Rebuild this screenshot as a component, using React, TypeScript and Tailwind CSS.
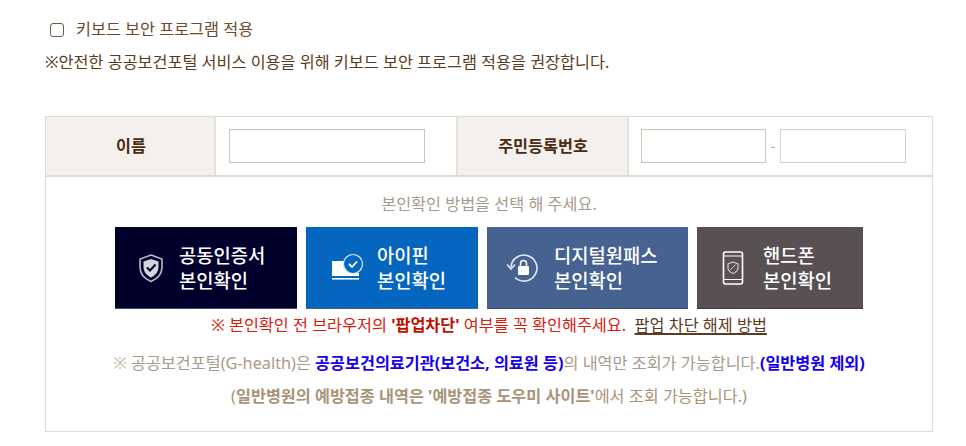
import React from "react";

const font = { fontFamily: '"Noto Sans", "Noto Sans CJK KR", sans-serif' };

function Shield() {
  return (
    <svg width="28" height="30" viewBox="0 0 28 30" fill="none" className="shrink-0">
      <path d="M14 2 L25 6 V14 C25 21 20 26 14 28.5 C8 26 3 21 3 14 V6 Z" stroke="#b9bcc8" strokeWidth="1.6" />
      <path d="M14 6 L21.5 8.6 V14 C21.5 19 18 22.5 14 24.5 C10 22.5 6.5 19 6.5 14 V8.6 Z" fill="#d3d5df" />
      <path d="M10 14.5 L13 17.5 L18.5 11.5" stroke="#00002d" strokeWidth="2" />
    </svg>
  );
}

function Ipin() {
  return (
    <svg width="32" height="30" viewBox="0 0 32 30" fill="none" className="shrink-0">
      <path d="M1 8 H13 A9 9 0 0 0 23 20 H28 V23 H1 Z" fill="#fff" />
      <rect x="1" y="25" width="27" height="1.6" fill="#fff" />
      <circle cx="22" cy="11" r="9.5" stroke="#d6e4f5" strokeWidth="1.2" />
      <path d="M18 11 L21 14 L26 8.5" stroke="#fff" strokeWidth="1.8" />
    </svg>
  );
}

function Lock() {
  return (
    <svg width="34" height="32" viewBox="0 0 34 32" fill="none" className="shrink-0">
      <path d="M5 15 A13 13 0 1 1 9 25.5" stroke="#e4e9f2" strokeWidth="1.6" />
      <path d="M1 12.5 L5 17 L9 12.5" stroke="#e4e9f2" strokeWidth="1.6" />
      <rect x="12" y="14" width="11" height="9" rx="1" fill="#fff" />
      <path d="M14.5 14 V11.5 A3 3 0 0 1 20.5 11.5 V14" stroke="#fff" strokeWidth="1.5" />
    </svg>
  );
}

function Phone() {
  return (
    <svg width="22" height="34" viewBox="0 0 22 34" fill="none" className="shrink-0">
      <rect x="1.5" y="1" width="19" height="32" rx="2" stroke="#fff" strokeWidth="1.6" />
      <path d="M1.5 5 H20.5 M1.5 28.5 H20.5" stroke="#fff" strokeWidth="1.2" />
      <path d="M11 11 L16 13 V16.5 C16 19.5 13.5 21.5 11 22.5 C8.5 21.5 6 19.5 6 16.5 V13 Z" stroke="#cfcbcc" strokeWidth="1.2" />
      <path d="M8.5 19 L13.5 13.5" stroke="#cfcbcc" strokeWidth="1" />
    </svg>
  );
}

export default function App() {
  return (
    <div className="w-[966px] h-[446px] bg-white overflow-hidden text-[16.25px] text-[#5a3c22]" style={font}>
      <div className="h-[19px]" />
      <label className="flex items-center h-[21px] pl-[50px] gap-[12px] text-[#6b4a2e]">
        <span className="w-[14px] h-[14px] rounded-[3px] border border-[#6b5a4a] bg-white" />
        <span>키보드 보안 프로그램 적용</span>
      </label>
      <p className="mt-[11px] ml-[45px] h-[22px] leading-[22px] text-[#5a3c22]">※안전한 공공보건포털 서비스 이용을 위해 키보드 보안 프로그램 적용을 권장합니다.</p>

      <div className="mt-[43px] ml-[45px] w-[888px] h-[316px] border border-[#e2dbd4]">
        <div className="flex h-[60px] border-b-2 border-[#e2dbd4]">
          <div className="w-[170px] bg-[#f3f0ed] flex items-center justify-center pl-[2px] font-bold text-[#4a2c12] border-r-2 border-[#e6e0da]">이름</div>
          <div className="w-[240px] flex items-center pl-[13px]">
            <div className="w-[196px] h-[34px] border border-[#cfc3b6] bg-white" />
          </div>
          <div className="w-[173px] bg-[#f3f0ed] flex items-center justify-center pl-[1px] font-bold text-[#4a2c12] border-x-2 border-[#e6e0da]">주민등록번호</div>
          <div className="flex-1 flex items-center pl-[12px]">
            <div className="w-[125px] h-[34px] border border-[#cfc3b6] bg-white" />
            <span className="w-[14px] text-center text-[11px] text-[#a98a64]">-</span>
            <div className="w-[126px] h-[34px] border border-[#d8cfc6] bg-white" />
          </div>
        </div>

        <p className="mt-[15px] h-[24px] leading-[24px] text-center text-[#a89a8c]">본인확인 방법을 선택 해 주세요.</p>

        <div className="mt-[11px] flex h-[82px] pl-[69px] text-[18.75px] leading-[25px] font-medium text-white">
          <button className="w-[182px] bg-[#00002d] flex items-center pl-[22px] gap-[14px] text-left border-b border-[#44506b]">
            <Shield />
            <span>공동인증서<br />본인확인</span>
          </button>
          <button className="ml-[9px] w-[172px] bg-[#0566bf] flex items-center pl-[25px] gap-[14px] text-left border-b border-[#44607b]">
            <Ipin />
            <span>아이핀<br />본인확인</span>
          </button>
          <button className="ml-[9px] w-[201px] bg-[#456291] flex items-center pl-[19px] gap-[14px] text-left border-b border-[#34496c]">
            <Lock />
            <span>디지털원패스<br />본인확인</span>
          </button>
          <button className="ml-[9px] w-[166px] bg-[#595053] flex items-center pl-[25px] gap-[19px] text-left border-b border-[#413a3c]">
            <Phone />
            <span>핸드폰<br />본인확인</span>
          </button>
        </div>

        <p className="mt-[4px] h-[24px] leading-[24px] text-center text-[#d8200f]">
          ※ 본인확인 전 브라우저의 <b className="text-[#c01000]">'팝업차단'</b> 여부를 꼭 확인해주세요.&nbsp;&nbsp;<a className="text-[#5a3c22] underline underline-offset-2 decoration-[1.5px]">팝업 차단 해제 방법</a>
        </p>
        <p className="mt-[14px] h-[24px] leading-[24px] text-center text-[#a89a8c]">
          <span className="text-[#c9b8a2]">※</span> 공공보건포털(G-health)은 <b className="text-[#1400ee]">공공보건의료기관(보건소, 의료원 등)</b>의 내역만 조회가 가능합니다.<b className="text-[#1400ee]">(일반병원 제외)</b>
        </p>
        <p className="mt-[9px] h-[24px] leading-[24px] text-center text-[#a89478]">
          (<b>일반병원의 예방접종 내역은 '예방접종 도우미 사이트'</b>에서 조회 가능합니다.)
        </p>
      </div>
    </div>
  );
}
